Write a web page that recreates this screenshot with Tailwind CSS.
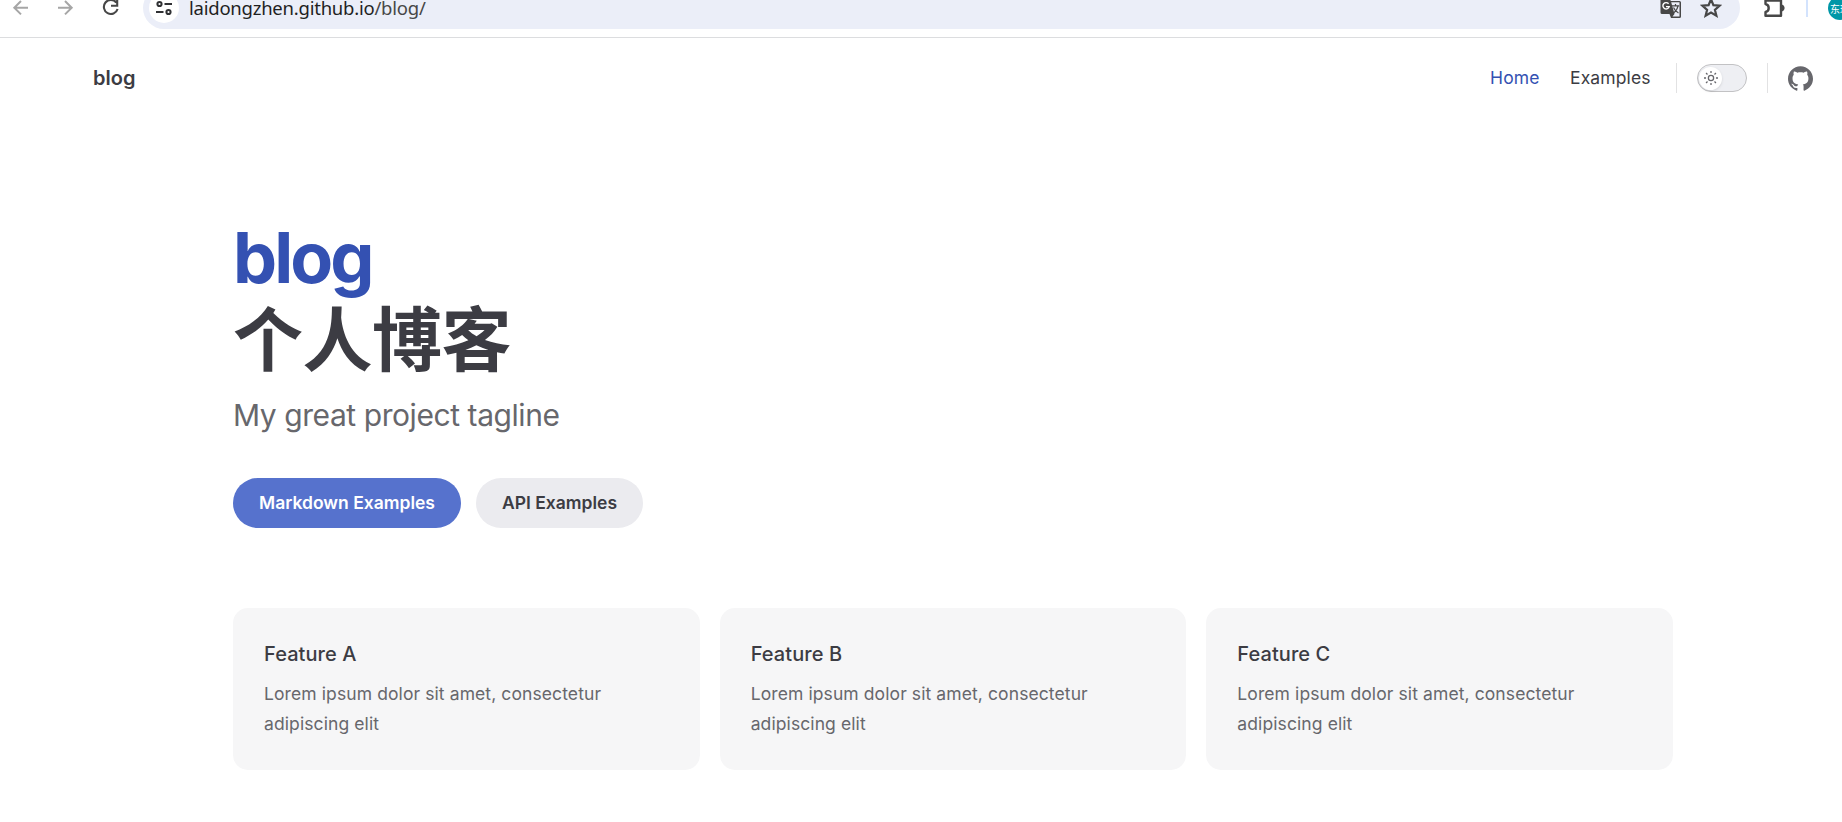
<!DOCTYPE html>
<html lang="zh-CN">
<head>
<meta charset="utf-8">
<title>blog</title>
<script src="https://cdn.jsdelivr.net/npm/@tailwindcss/browser@4"></script>
</head>
<body class="h-[822px] w-[1842px] overflow-hidden bg-white font-['Inter','Noto_Sans_CJK_SC',sans-serif] text-[#3c3c43]">
<!-- Browser toolbar -->
<div class="h-[38px] overflow-hidden border-b border-[#dcdddf] bg-white">
  <div class="-mt-[13px] flex h-[42px] items-center">
    <svg class="ml-[11px] size-5 shrink-0" viewBox="0 0 20 20" fill="none" stroke="#a6a6a6" stroke-width="2"><path d="M17 9.700H3.500M10 3L3.300 9.700l6.700 6.700"/></svg>
    <svg class="ml-[25px] size-5 shrink-0" viewBox="0 0 20 20" fill="none" stroke="#a6a6a6" stroke-width="2"><path d="M2 9.700h13.500M9 3l6.700 6.700L9 16.400"/></svg>
    <svg class="ml-[25px] size-5 shrink-0" viewBox="0 0 20 20" fill="none" stroke="#474747" stroke-width="2.100"><path d="M15.300 4.500A7 7 0 1 0 16.600 11M16.200 1.500v6.200H10"/></svg>
    <div class="ml-[22px] flex h-[42px] w-[1597px] shrink-0 items-center rounded-full bg-[#ebeef8] pl-[6px] pr-[18px]">
      <div class="flex size-[30px] items-center justify-center rounded-full bg-white">
        <svg class="size-[18px]" viewBox="0 0 18 18" fill="none" stroke="#303134" stroke-width="2"><circle cx="4.500" cy="5" r="2.100"/><path d="M9.500 5H17M1 13h7.500"/><circle cx="13.500" cy="13" r="2.100"/></svg>
      </div>
      <div class="ml-[10px] whitespace-nowrap font-['Noto_Sans',sans-serif] text-[18.500px] leading-6 tracking-[-0.23px] text-[#1f1f1f]">laidongzhen.github.io<span class="text-[#474747]">/blog/</span></div>
      <svg class="ml-auto h-[22px] w-[22px] shrink-0" viewBox="0 0 22 22"><path fill="#474747" d="M2 0h7.500l1.200 4H19.500A1.500 1.500 0 0 1 21 5.500v14a1.500 1.500 0 0 1-1.500 1.500H11l-1.500-4H2a1.500 1.500 0 0 1-1.500-1.500V1.500A1.500 1.500 0 0 1 2 0z"/><path fill="#ebeef8" d="M11.200 5.200h8.300v14.400h-7l2-2.700z"/><path d="M8.600 6.800A3.200 3.200 0 1 0 9.200 9.600H6" fill="none" stroke="#fff" stroke-width="1.400"/><path d="M12 8.800h7.200M15.500 7v1.800M18 9c-.6 3-2.300 5.500-4.500 7M13.500 10.500c1 2.300 2.600 4.300 5 5.500" fill="none" stroke="#474747" stroke-width="1.200"/></svg>
      <svg class="ml-[18px] size-[22px] shrink-0" viewBox="0 0 22 22" fill="none" stroke="#474747" stroke-width="2.200"><path d="M11 2.200l2.400 6 6.200.5-4.700 4.100 1.500 6-5.400-3.200-5.400 3.200 1.500-6-4.700-4.100 6.200-.5z"/></svg>
    </div>
    <svg class="ml-[22px] size-6 shrink-0" viewBox="0 0 24 24"><path fill="none" stroke="#474747" stroke-width="2.400" stroke-linejoin="round" d="M3.500 4.500h15.500V19.700H3.500V16c2-.4 3.200-1.900 3.200-4S5.500 8.400 3.500 8z"/><path fill="#474747" d="M19 8.500c2.200.2 3.600 1.600 3.600 3.500s-1.400 3.300-3.600 3.500z"/></svg>
    <div class="ml-5 h-[18px] w-[2px] shrink-0 bg-[#d3e3fd]"></div>
    <div class="ml-5 flex size-6 shrink-0 items-center overflow-hidden whitespace-nowrap rounded-full bg-[#0097a7] pl-[2px] font-['Noto_Sans_CJK_SC',sans-serif] text-[10px] text-white">东珍</div>
  </div>
</div>

<!-- Site navigation -->
<header class="flex h-20 items-center pl-[93px] pr-[29px]">
  <a class="text-[20px] font-semibold leading-[80px]">blog</a>
  <nav class="ml-auto flex items-center text-[17.500px] tracking-[0.130px]">
    <a class="w-[80px] text-[#3451b2]">Home</a>
    <a class="w-[106px]">Examples</a>
  </nav>
  <div class="h-[30px] w-px bg-[#e2e2e3]"></div>
  <div class="ml-5 flex h-[28px] w-[50px] items-center rounded-full border border-[#c2c2c4] bg-[#eeeff3] pl-px">
    <div class="flex size-[23px] items-center justify-center rounded-full bg-white shadow-sm">
      <svg class="size-[14px]" viewBox="0 0 24 24" fill="none" stroke="#67676c" stroke-width="2.200"><circle cx="12" cy="12" r="4.500"/><path d="M12 0v3.500M12 20.500v3.500M0 12h3.500M20.500 12h3.500M3.500 3.500l2.500 2.500M18 18l2.500 2.500M3.500 20.500l2.500-2.500M18 6l2.500-2.500"/></svg>
    </div>
  </div>
  <div class="ml-5 h-[30px] w-px bg-[#e2e2e3]"></div>
  <svg class="ml-5 size-[25px]" viewBox="0 0 24 24" fill="#67676c"><path d="M12 .297c-6.630 0-12 5.373-12 12 0 5.303 3.438 9.800 8.205 11.385.6.113.82-.258.82-.577 0-.285-.01-1.040-.015-2.040-3.338.724-4.042-1.610-4.042-1.610C4.422 18.070 3.633 17.700 3.633 17.700c-1.087-.744.084-.729.084-.729 1.205.084 1.838 1.236 1.838 1.236 1.070 1.835 2.809 1.305 3.495.998.108-.776.417-1.305.76-1.605-2.665-.3-5.466-1.332-5.466-5.930 0-1.310.465-2.380 1.235-3.220-.135-.303-.54-1.523.105-3.176 0 0 1.005-.322 3.300 1.230.96-.267 1.980-.399 3-.405 1.020.006 2.040.138 3 .405 2.280-1.552 3.285-1.230 3.285-1.230.645 1.653.24 2.873.12 3.176.765.84 1.230 1.910 1.230 3.220 0 4.610-2.805 5.625-5.475 5.920.42.36.81 1.096.81 2.220 0 1.606-.015 2.896-.015 3.286 0 .315.21.69.825.57C20.565 22.092 24 17.592 24 12.297c0-6.627-5.373-12-12-12"/></svg>
</header>

<main class="ml-[233px] w-[1440px] pt-[100px]">
  <h1 class="text-[70px] font-bold leading-[80px]">
    <span class="block h-20 tracking-[-2.900px] text-[#3451b2]">blog</span>
    <span class="block h-20 pt-[3px] tracking-[-0.5px]">个人博客</span>
  </h1>
  <p class="pt-[15px] text-[30px] leading-[45px] tracking-[-0.430px] text-[#67676c]">My great project tagline</p>
  <div class="flex gap-[15px] pt-10 text-[17.500px] font-semibold leading-[50px]">
    <a class="h-[50px] w-[228px] rounded-full bg-[#5672cd] text-center text-white">Markdown Examples</a>
    <a class="h-[50px] w-[167px] rounded-full bg-[#ebebef] text-center">API Examples</a>
  </div>
  <section class="mt-20 grid grid-cols-3 gap-5">
    <article class="h-[162px] rounded-[15px] bg-[#f6f6f7] p-[31px]">
      <h2 class="text-[20px] font-medium leading-[30px] tracking-[0.080px]">Feature A</h2>
      <p class="pt-[10px] text-[17.500px] leading-[30px] tracking-[0.100px] text-[#67676c]">Lorem ipsum dolor sit amet, consectetur adipiscing elit</p>
    </article>
    <article class="h-[162px] rounded-[15px] bg-[#f6f6f7] p-[31px]">
      <h2 class="text-[20px] font-medium leading-[30px] tracking-[0.080px]">Feature B</h2>
      <p class="pt-[10px] text-[17.500px] leading-[30px] tracking-[0.100px] text-[#67676c]">Lorem ipsum dolor sit amet, consectetur adipiscing elit</p>
    </article>
    <article class="h-[162px] rounded-[15px] bg-[#f6f6f7] p-[31px]">
      <h2 class="text-[20px] font-medium leading-[30px] tracking-[0.080px]">Feature C</h2>
      <p class="pt-[10px] text-[17.500px] leading-[30px] tracking-[0.100px] text-[#67676c]">Lorem ipsum dolor sit amet, consectetur adipiscing elit</p>
    </article>
  </section>
</main>
</body>
</html>
